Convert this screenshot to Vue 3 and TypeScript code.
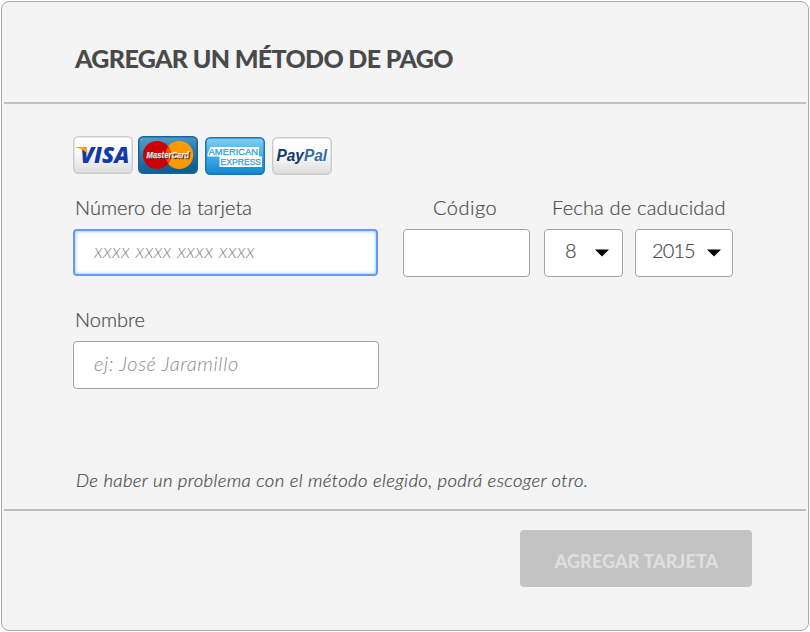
<script setup lang="ts">
import { ref } from 'vue'

const cardNumber = ref('')
const code = ref('')
const holder = ref('')
const month = ref(8)
const year = ref(2015)
</script>

<template>
  <form class="panel" @submit.prevent>
    <header class="head">
      <h1><span>AGREGAR UN MÉTODO DE PAGO</span></h1>
    </header>

    <main class="body">
      <div class="brands">
        <svg class="brand" width="60" height="38" viewBox="0 0 60 38">
          <defs>
            <linearGradient id="paper" x1="0" y1="0" x2="0" y2="1">
              <stop offset="0" stop-color="#ffffff" />
              <stop offset="0.5" stop-color="#f8f8f8" />
              <stop offset="1" stop-color="#dcdcdc" />
            </linearGradient>
          </defs>
          <rect x="0.75" y="0.75" width="58.5" height="36.5" rx="4.5" fill="url(#paper)" stroke="#cccccc" stroke-width="1.5" />
          <text class="logo visa" x="7.3" y="27" textLength="49" lengthAdjust="spacingAndGlyphs">VISA</text>
          <path d="M3.2 11H11Q13.4 11 13.8 13L14.6 18.5Q11 12.8 3.2 11.7Z" fill="#f7a11a" />
        </svg>
        <svg class="brand" width="60" height="38" viewBox="0 0 60 38">
          <defs>
            <linearGradient id="navy" x1="0" y1="0" x2="0.2" y2="1">
              <stop offset="0" stop-color="#5ba2cb" />
              <stop offset="0.5" stop-color="#2a7db0" />
              <stop offset="1" stop-color="#0d5c93" />
            </linearGradient>
          </defs>
          <rect x="0.75" y="0.75" width="58.5" height="36.5" rx="4.5" fill="url(#navy)" stroke="#17649a" stroke-width="1.5" />
          <circle cx="41.2" cy="19" r="14" fill="#ff9900" />
          <circle cx="19" cy="19" r="14" fill="#cc0000" />
          <path d="M30.1 10.5A14 14 0 0 1 30.1 27.5A14 14 0 0 1 30.1 10.5Z" fill="#e85600" />
          <text class="logo master" x="8.6" y="22.4" textLength="42.5" lengthAdjust="spacingAndGlyphs">MasterCard</text>
        </svg>
        <svg class="brand amex-card" width="60" height="38" viewBox="0 0 60 38">
          <defs>
            <linearGradient id="sky" x1="0" y1="0" x2="0" y2="1">
              <stop offset="0" stop-color="#82cdf3" />
              <stop offset="0.5" stop-color="#40aee6" />
              <stop offset="1" stop-color="#1388d0" />
            </linearGradient>
          </defs>
          <rect x="0.75" y="0.75" width="58.5" height="36.5" rx="4.5" fill="url(#sky)" stroke="#1476b8" stroke-width="1.5" />
          <path d="M5.5 10H54V19.5H57V30H14.5V19.5H2.5V17Z" fill="#fff" />
          <text class="logo amex" x="3.6" y="17.8" textLength="49.5" lengthAdjust="spacingAndGlyphs">AMERICAN</text>
          <text class="logo amex" x="15.6" y="28.2" textLength="40.5" lengthAdjust="spacingAndGlyphs">EXPRESS</text>
        </svg>
        <svg class="brand amex-card" width="60" height="38" viewBox="0 0 60 38">
          <rect x="0.75" y="0.75" width="58.5" height="36.5" rx="4.5" fill="url(#paper)" stroke="#cccccc" stroke-width="1.5" />
          <text class="logo paypal" x="4.5" y="23.6" textLength="50.5" lengthAdjust="spacingAndGlyphs"><tspan fill="#14376b">Pay</tspan><tspan fill="#336da8">Pal</tspan></text>
        </svg>
      </div>

      <div class="row">
        <div class="field number">
          <label for="number">Número de la tarjeta</label>
          <input id="number" v-model="cardNumber" class="active" placeholder="xxxx xxxx xxxx xxxx" />
        </div>
        <div class="field code">
          <label for="code">Código</label>
          <input id="code" v-model="code" />
        </div>
        <div class="field expiry">
          <label>Fecha de caducidad</label>
          <div class="selects">
            <button type="button" class="select month">
              <span>{{ month }}</span>
              <svg width="14" height="8" viewBox="0 0 14 8"><path d="M0 0.5H14L7 7.5Z" /></svg>
            </button>
            <button type="button" class="select year">
              <span>{{ year }}</span>
              <svg width="14" height="8" viewBox="0 0 14 8"><path d="M0 0.5H14L7 7.5Z" /></svg>
            </button>
          </div>
        </div>
      </div>

      <div class="field holder">
        <label for="holder">Nombre</label>
        <input id="holder" v-model="holder" placeholder="ej: José Jaramillo" />
      </div>

      <p class="note">De haber un problema con el método elegido, podrá escoger otro.</p>
    </main>

    <footer class="foot">
      <button type="submit" class="submit" disabled>AGREGAR TARJETA</button>
    </footer>
  </form>
</template>

<style>
body {
  margin: 0;
  background: #fff;
}
</style>

<style scoped>
.panel {
  box-sizing: border-box;
  width: 808px;
  height: 630px;
  margin: 1px 0 0 1px;
  padding: 0 2px;
  border: 1px solid #a9a9a9;
  border-radius: 8px;
  background: #f4f4f4;
  color: #4a4a4a;
  font-family: Lato, 'Liberation Sans', sans-serif;
  overflow: hidden;
}
.head {
  box-sizing: border-box;
  height: 102px;
  padding: 41px 0 0 71px;
  border-bottom: 2px solid #c0c0c0;
}
h1 {
  margin: 0;
  font-size: 25px;
  line-height: 30px;
  font-weight: 900;
  letter-spacing: -0.65px;
  white-space: nowrap;
}
.body {
  box-sizing: border-box;
  height: 407px;
  padding: 32px 0 0 69px;
  border-bottom: 2px solid #bcbcbc;
}
.brands {
  display: flex;
  height: 39px;
}
.brand {
  display: block;
  margin-right: 5px;
}
.brand + .brand {
  margin-right: 7px;
}
.amex-card {
  margin-top: 1px;
}
.logo {
  font-family: 'Liberation Sans', sans-serif;
  font-weight: 700;
  font-style: italic;
}
.visa {
  font-family: 'Open Sans', sans-serif;
  font-weight: 800;
  font-size: 22px;
  fill: #1438a8;
}
.master {
  font-size: 8.5px;
  fill: #fff;
  stroke: #fff;
  stroke-width: 0.25px;
  text-shadow: 1px 1px 0 #5a1208;
}
.amex {
  font-size: 8.6px;
  font-weight: 400;
  font-style: normal;
  fill: #2f9ddb;
  stroke: #2f9ddb;
  stroke-width: 0.25px;
}
.paypal {
  font-size: 16px;
}
.row {
  display: flex;
  margin-top: 18px;
}
.field {
  display: flex;
  flex-direction: column;
}
label {
  height: 36px;
  padding-left: 2px;
  font-size: 20px;
  line-height: 28px;
  font-weight: 300;
  white-space: nowrap;
  -webkit-text-stroke: 0.2px #4a4a4a;
}
input,
.select {
  box-sizing: border-box;
  height: 48px;
  border: 1px solid #a3a3a3;
  border-radius: 4px;
  background: #fff;
  color: #4a4a4a;
  font-family: inherit;
  font-size: 20px;
  font-weight: 300;
  outline: none;
}
input {
  width: 100%;
  padding: 0 20px 4px;
}
input::placeholder {
  color: #8c8c8c;
  font-style: italic;
  opacity: 1;
}
.number,
.holder {
  width: 306px;
}
.active {
  width: 305px;
  height: 47px;
  border: 2px solid #6799f3;
  box-shadow: inset 0 0 3px 1px #a8d5ff;
  padding-left: 19px;
  padding-bottom: 5px;
  letter-spacing: 0.34px;
}
.code {
  width: 127px;
  margin-left: 24px;
}
.code label {
  padding-left: 30px;
  letter-spacing: 0.5px;
}
.expiry {
  margin-left: 14px;
}
.expiry label {
  padding-left: 8px;
  letter-spacing: 0.2px;
}
.selects {
  display: flex;
  gap: 12px;
}
.select {
  display: flex;
  align-items: center;
  padding: 0;
}
.select span {
  padding-bottom: 6px;
  -webkit-text-stroke: 0.2px #4a4a4a;
}
.select svg {
  margin: 0 13px 0 auto;
}
.month {
  width: 79px;
  padding-left: 20px;
}
.year {
  width: 98px;
  padding-left: 16px;
  letter-spacing: -0.9px;
}
.select.year svg {
  margin-right: 11px;
}
.holder {
  margin-top: 28px;
}
.holder input {
  letter-spacing: 0.6px;
}
.note {
  margin: 78px 0 0 3px;
  font-size: 18.5px;
  line-height: 26px;
  font-weight: 300;
  font-style: italic;
  letter-spacing: 0.37px;
  white-space: nowrap;
  -webkit-text-stroke: 0.2px #4a4a4a;
}
.foot {
  display: flex;
  justify-content: flex-end;
  padding: 19px 54px 0 0;
}
.submit {
  width: 232px;
  height: 57px;
  padding: 4px 0 0 1px;
  border: 0;
  border-radius: 4px;
  background: #c3c3c3;
  color: #dedede;
  font-family: inherit;
  font-size: 18px;
  font-weight: 900;
  letter-spacing: 0.1px;
  white-space: nowrap;
}
</style>
